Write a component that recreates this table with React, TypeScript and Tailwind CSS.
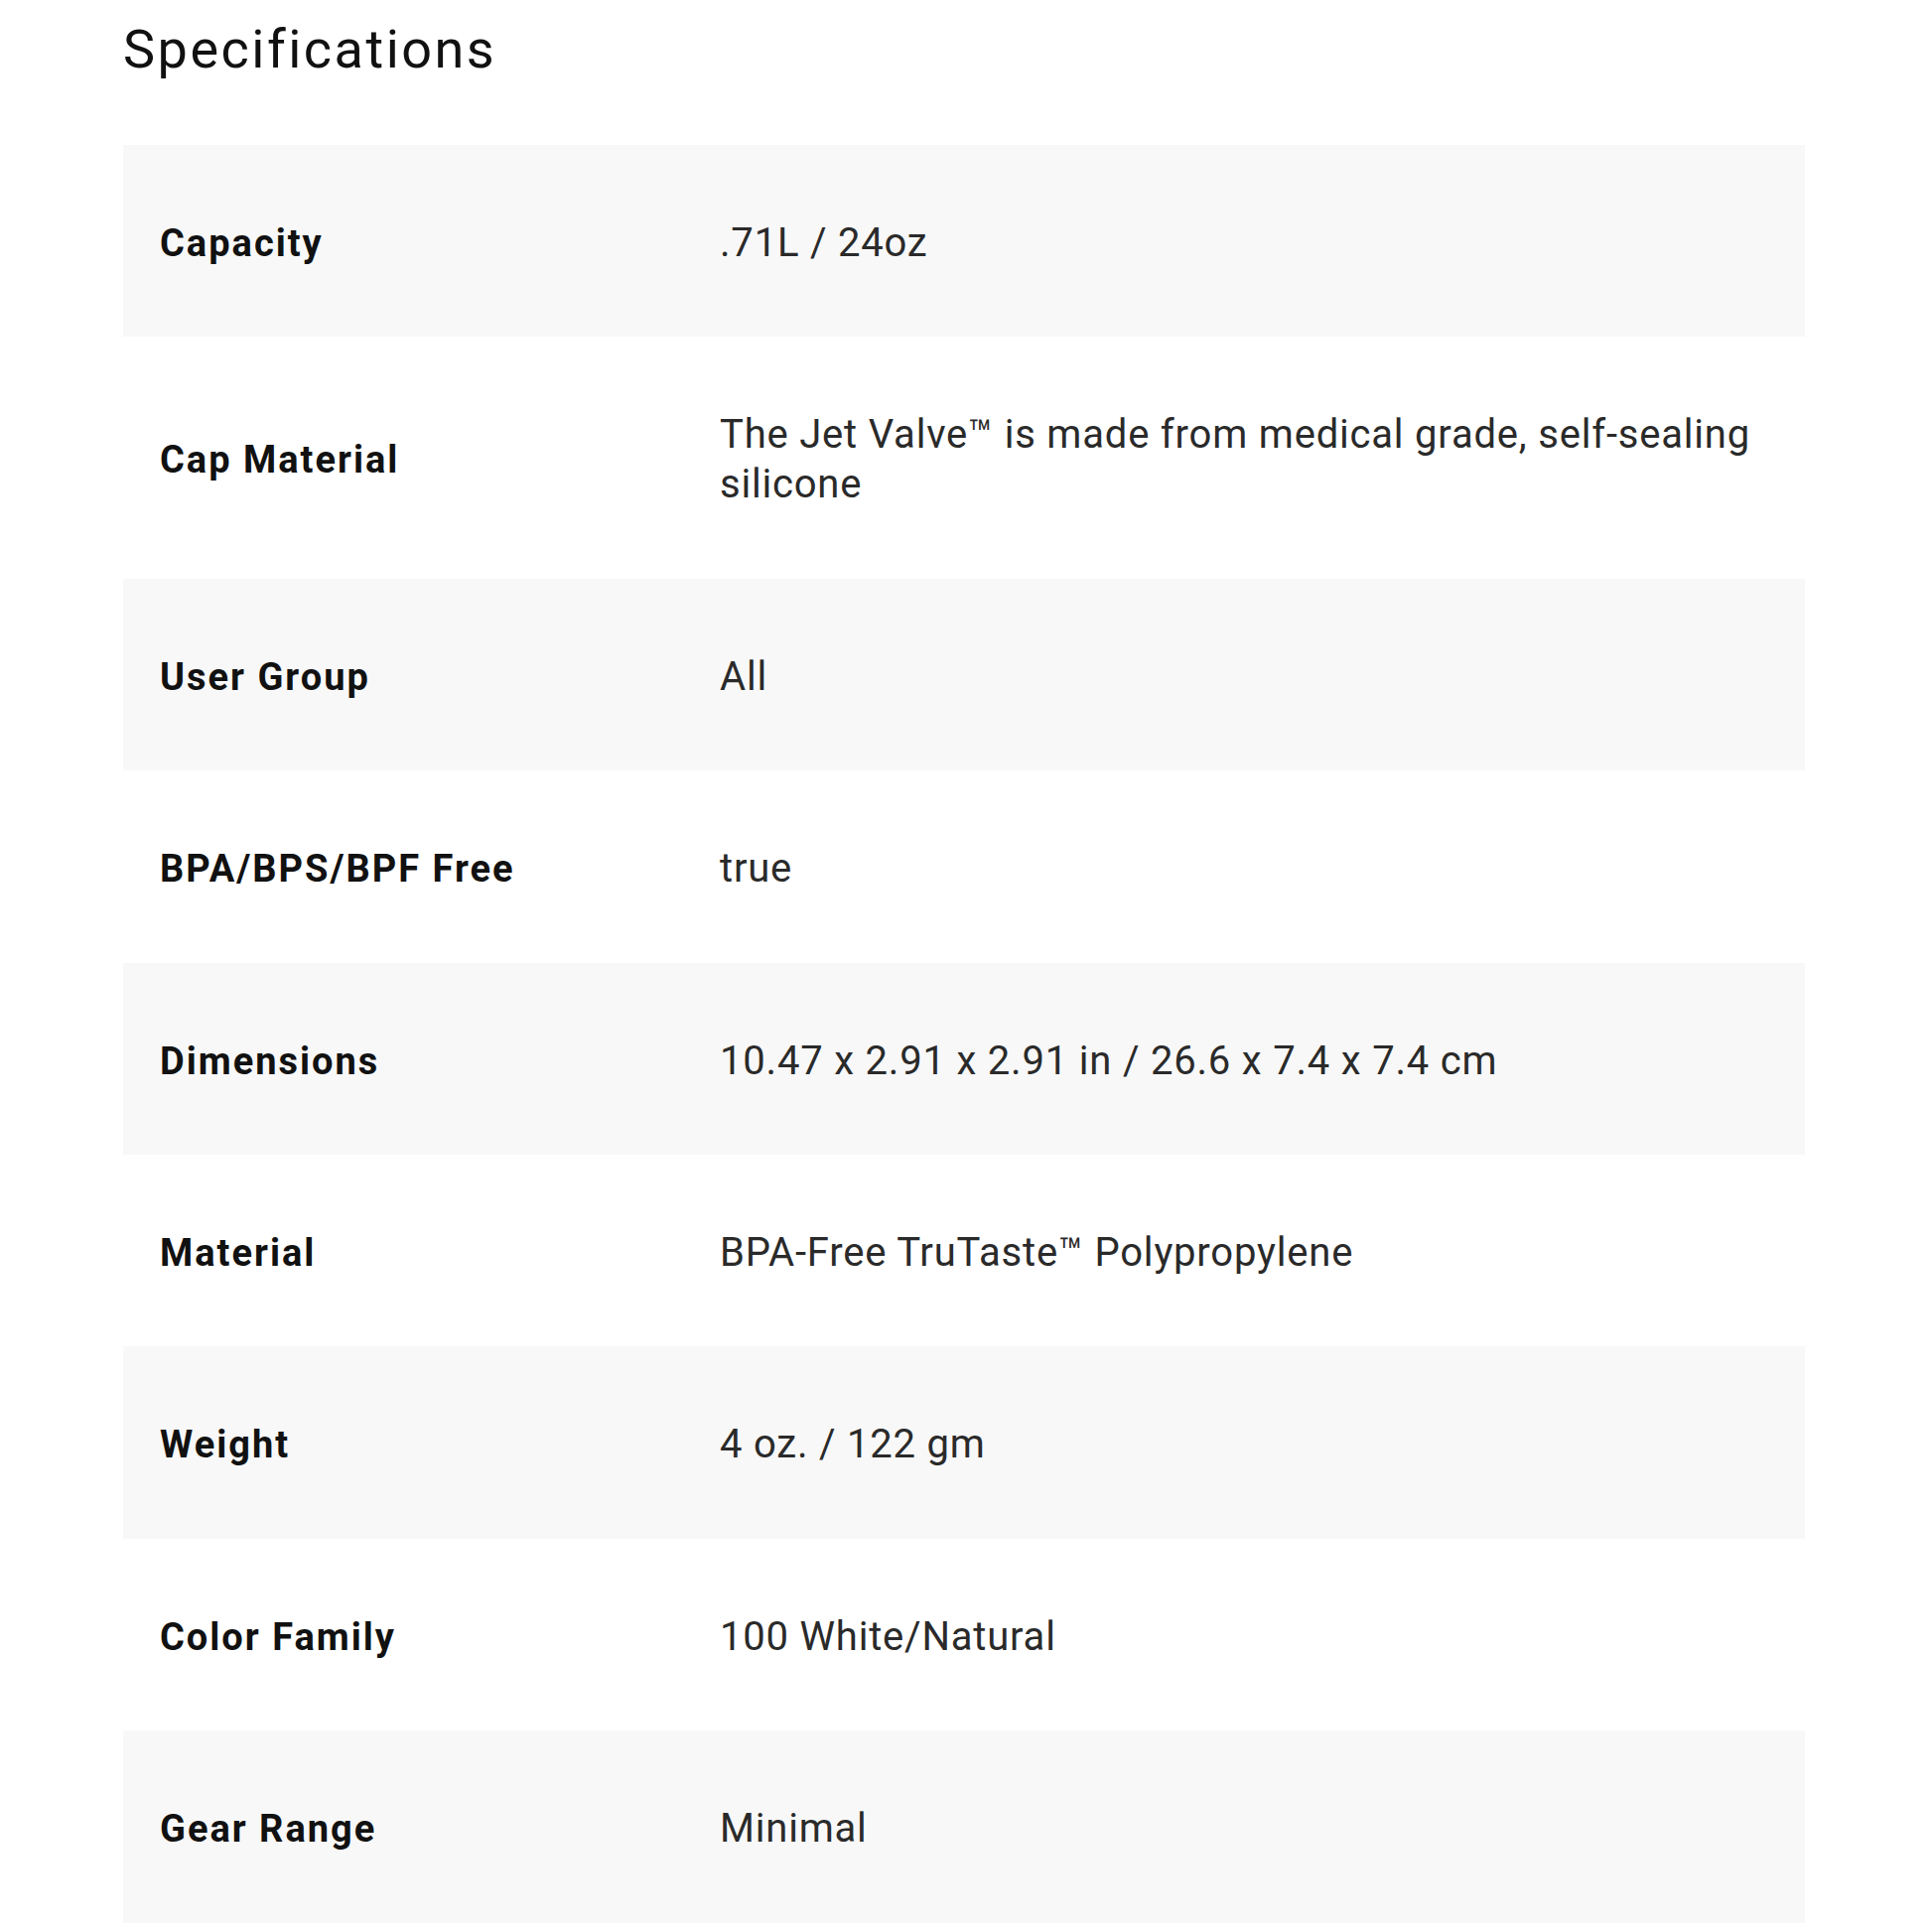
const SPECS: { label: string; value: string }[] = [
  { label: 'Capacity', value: '.71L / 24oz' },
  { label: 'Cap Material', value: 'The Jet Valve™ is made from medical grade, self-sealing silicone' },
  { label: 'User Group', value: 'All' },
  { label: 'BPA/BPS/BPF Free', value: 'true' },
  { label: 'Dimensions', value: '10.47 x 2.91 x 2.91 in / 26.6 x 7.4 x 7.4 cm' },
  { label: 'Material', value: 'BPA-Free TruTaste™ Polypropylene' },
  { label: 'Weight', value: '4 oz. / 122 gm' },
  { label: 'Color Family', value: '100 White/Natural' },
  { label: 'Gear Range', value: 'Minimal' },
];

export default function App() {
  return (
    <div className="min-h-screen bg-white px-[124px] pt-[14px] font-['Roboto',sans-serif] text-[#1a1a1a]">
      {/* Heading */}
      <h2 className="text-[54px] leading-[72px] font-normal tracking-[2.5px] text-[#111]">Specifications</h2>

      {/* Spec table */}
      <div className="mt-[60px] w-[1694px]">
        {SPECS.map((spec, i) => (
          <div
            key={spec.label}
            className={`grid grid-cols-[601px_1fr] items-center pt-[74px] pb-[69.4px] pr-[30px] ${
              i % 2 === 0 ? 'bg-[#f8f8f8]' : 'bg-white'
            }`}
          >
            <div className="pl-[37px] text-[38px] leading-[50px] font-bold tracking-[2px] text-[#111]">
              {spec.label}
            </div>
            <div className="text-[40px] leading-[50px] tracking-[0.8px] text-[#2a2a2a]">{spec.value}</div>
          </div>
        ))}
      </div>
    </div>
  );
}
